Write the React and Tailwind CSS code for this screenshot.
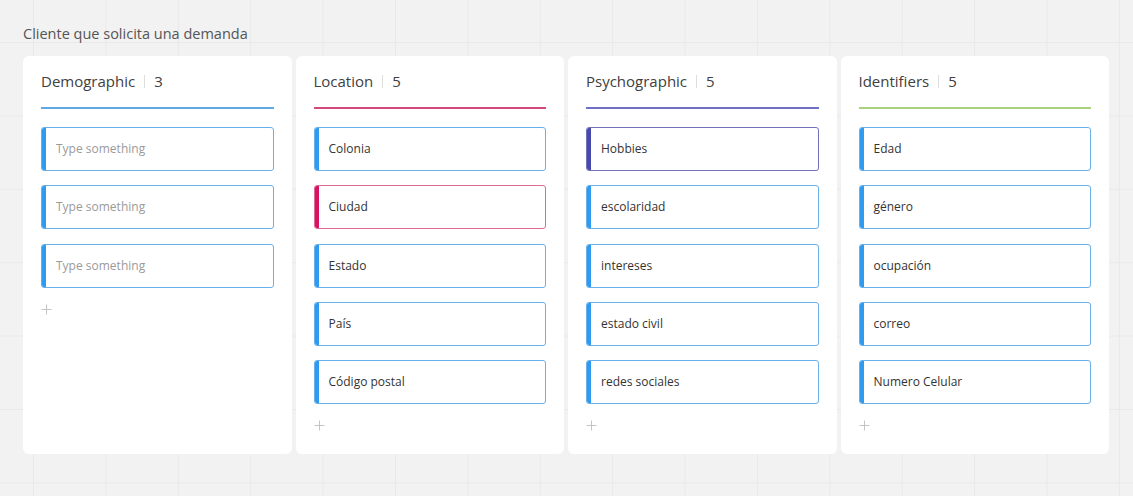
import React from "react";

const columns = [
  {
    title: "Demographic",
    line: "bg-[#5ea8e6]",
    items: [
      { text: "Type something", placeholder: true },
      { text: "Type something", placeholder: true },
      { text: "Type something", placeholder: true },
    ],
  },
  {
    title: "Location",
    line: "bg-[#d4497d]",
    items: [
      { text: "Colonia" },
      { text: "Ciudad", variant: "pink" },
      { text: "Estado" },
      { text: "País" },
      { text: "Código postal" },
    ],
  },
  {
    title: "Psychographic",
    line: "bg-[#7070c6]",
    items: [
      { text: "Hobbies", variant: "purple" },
      { text: "escolaridad" },
      { text: "intereses" },
      { text: "estado civil" },
      { text: "redes sociales" },
    ],
  },
  {
    title: "Identifiers",
    line: "bg-[#a9d27e]",
    items: [
      { text: "Edad" },
      { text: "género" },
      { text: "ocupación" },
      { text: "correo" },
      { text: "Numero Celular" },
    ],
  },
];

function Item({ text, placeholder, variant }) {
  let border = "border-[#6aafe7]";
  let bar = "bg-[#2e9af0]";
  if (variant === "pink") {
    border = "border-[#dc6c95]";
    bar = "bg-[#d8125f]";
  } else if (variant === "purple") {
    border = "border-[#7272b8]";
    bar = "bg-[#4848ad]";
  }
  return (
    <div className={`relative flex h-[44px] items-center overflow-hidden rounded-[3px] border ${border} bg-white pl-[14px]`}>
      <div className={`absolute left-0 top-0 bottom-0 w-[4px] ${bar}`} />
      <span className={`text-[12px] ${placeholder ? "text-[#9a9a9a]" : "text-[#333333]"}`}>{text}</span>
    </div>
  );
}

function Plus() {
  return (
    <svg width="11" height="11" viewBox="0 0 11 11">
      <path d="M5.5 0.5v10M0.5 5.5h10" stroke="#c4c4c4" strokeWidth="1" />
    </svg>
  );
}

function Column({ col }) {
  return (
    <div className="flex h-[398px] w-[268.5px] shrink-0 flex-col rounded-[6px] bg-white px-[18px]">
      <div className="mt-[15px] flex h-[20px] items-center text-[15px] text-[#404040]">
        <span>{col.title}</span>
        <span className="mx-[9px] h-[13px] w-px bg-[#dddddd]" />
        <span>{col.items.length}</span>
      </div>
      <div className={`mt-[16px] h-[2px] ${col.line}`} />
      <div className="mt-[18px] flex flex-col gap-[14.25px]">
        {col.items.map((it, i) => (
          <Item key={i} {...it} />
        ))}
      </div>
      <div className="mt-[16px] flex">
        <Plus />
      </div>
    </div>
  );
}

export default function App() {
  return (
    <div
      className="h-[496px] w-[1133px] overflow-hidden bg-[#f2f2f2] bg-[linear-gradient(to_right,#e9e9e9_1px,transparent_1px),linear-gradient(to_bottom,#e9e9e9_1px,transparent_1px)] bg-[size:72.4px_73.4px] bg-[position:33px_42px] pl-[23px] pt-[24px]"
      style={{ fontFamily: '"Open Sans", "Noto Sans", sans-serif' }}
    >
      <div className="h-[20px] text-[14.5px] leading-[20px] text-[#555555]">Cliente que solicita una demanda</div>
      <div className="mt-[12px] flex gap-[4px]">
        {columns.map((c) => (
          <Column key={c.title} col={c} />
        ))}
      </div>
    </div>
  );
}
